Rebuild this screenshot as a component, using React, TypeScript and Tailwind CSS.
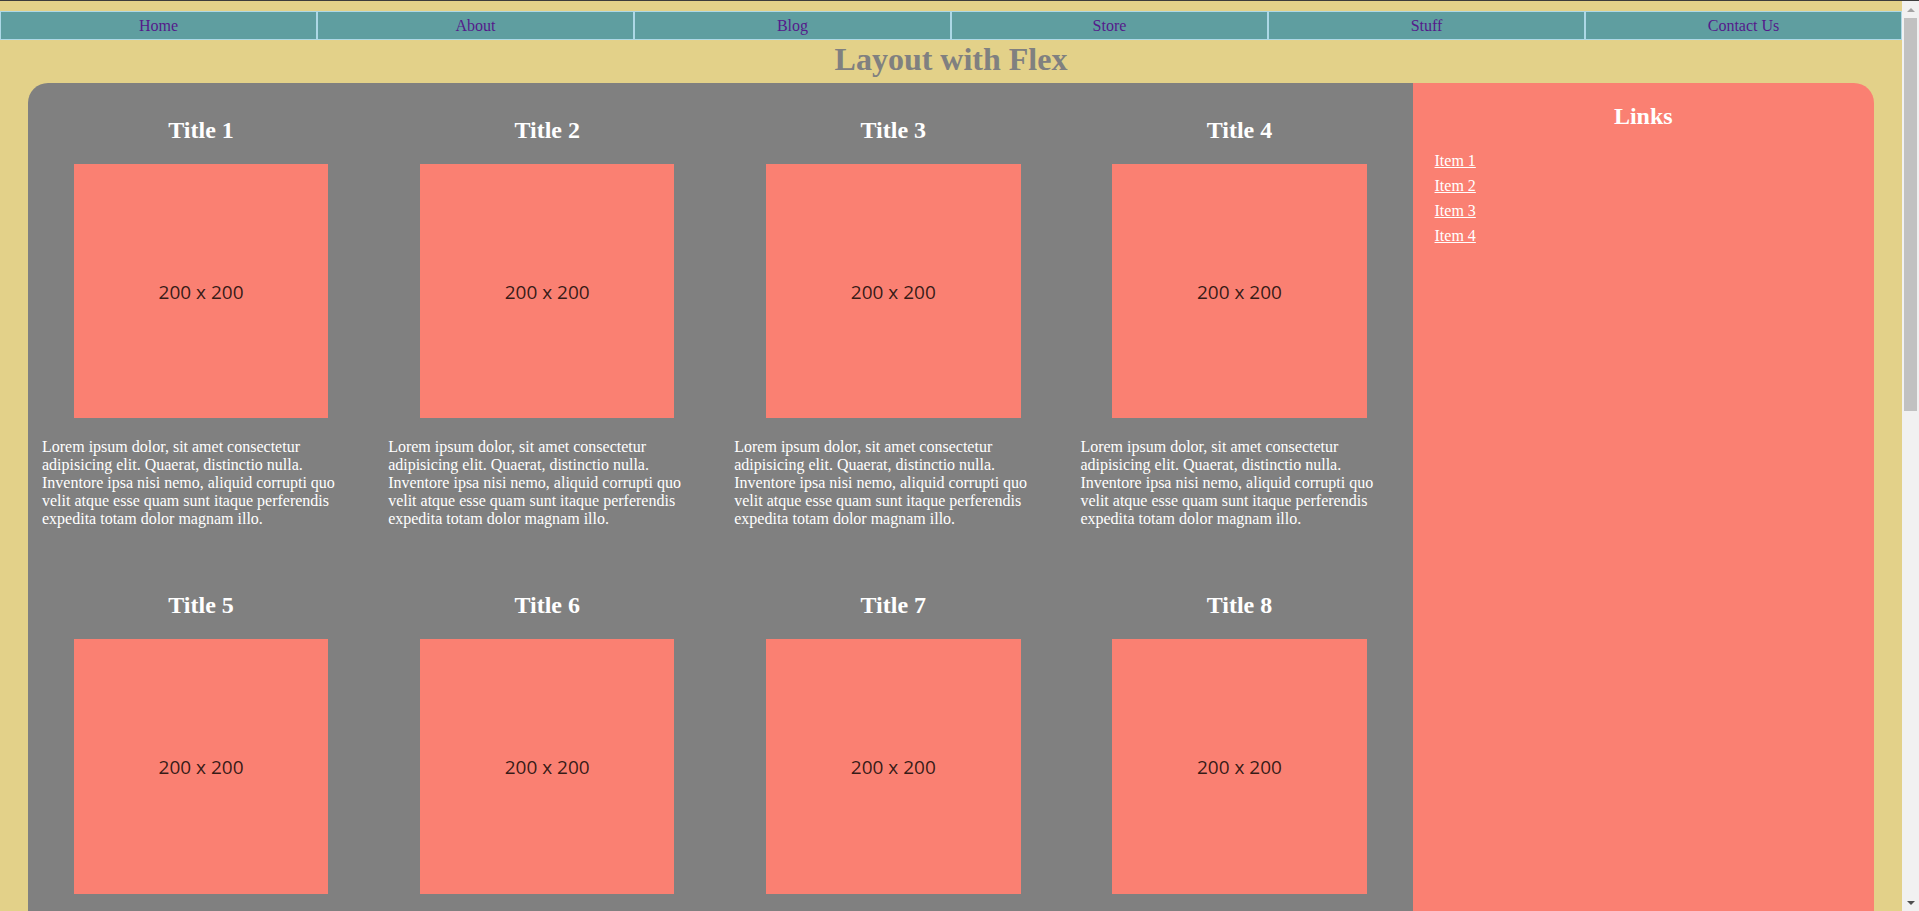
const navItems = ["Home", "About", "Blog", "Store", "Stuff", "Contact Us"];
const cards = [1, 2, 3, 4, 5, 6, 7, 8];
const links = ["Item 1", "Item 2", "Item 3", "Item 4"];

const lorem =
  "Lorem ipsum dolor, sit amet consectetur adipisicing elit. Quaerat, distinctio nulla. Inventore ipsa nisi nemo, aliquid corrupti quo velit atque esse quam sunt itaque perferendis expedita totam dolor magnam illo.";

function Card({ n }: { n: number }) {
  return (
    <article className="w-1/4 p-[14px] text-white">
      <h2 className="my-[19.92px] text-center text-2xl leading-[27px] font-bold">Title {n}</h2>
      <div className="mx-auto flex aspect-square w-[80%] items-center justify-center bg-[#fa8072]">
        <span className="pt-[2px] font-['Open_Sans',sans-serif] text-[19px] text-black/80">200 x 200</span>
      </div>
      <p className="mt-[20px] mb-4 text-base leading-[18px]">{lorem}</p>
    </article>
  );
}

// browser-style scrollbar drawn over the right edge
function Scrollbar() {
  return (
    <div className="fixed top-[1px] right-0 bottom-0 flex w-[17px] flex-col bg-[#f1f1f1]">
      <div className="flex h-[17px] items-center justify-center">
        <div className="h-0 w-0 border-x-[4px] border-b-[4px] border-x-transparent border-b-[#a3a3a3]" />
      </div>
      <div className="mx-[2px] h-[393px] bg-[#c1c1c1]" />
      <div className="flex-1" />
      <div className="flex h-[17px] items-center justify-center">
        <div className="h-0 w-0 border-x-[4px] border-t-[4px] border-x-transparent border-t-[#505050]" />
      </div>
    </div>
  );
}

export default function App() {
  return (
    <div className="min-h-screen border-t border-[#3c3c3c] bg-[#e3d189] pt-[10px] pr-[17px] font-['Liberation_Serif','Times_New_Roman',serif]">
      <nav>
        <ul className="flex">
          {navItems.map((item) => (
            <li
              key={item}
              className="flex h-[29px] flex-1 items-center justify-center border border-[#add8e6] bg-[#5f9ea0]"
            >
              <a href="#" className="text-base text-[#551a8b]">
                {item}
              </a>
            </li>
          ))}
        </ul>
      </nav>

      <h1 className="pt-[1px] text-center text-[32px] leading-[37px] font-bold text-[#808080]">Layout with Flex</h1>

      <div className="mx-[28px] mt-[5px] flex overflow-hidden rounded-t-[20px]">
        <main className="flex flex-[3] flex-wrap bg-[#808080]">
          {cards.map((n) => (
            <Card key={n} n={n} />
          ))}
        </main>
        <aside className="flex-1 bg-[#fa8072] text-white">
          <h2 className="mt-[19.92px] mb-[18px] text-center text-2xl leading-[27px] font-bold">Links</h2>
          <ul className="pl-[22px]">
            {links.map((l) => (
              <li key={l} className="leading-[25px]">
                <a href="#" className="text-base text-white underline">
                  {l}
                </a>
              </li>
            ))}
          </ul>
        </aside>
      </div>

      <Scrollbar />
    </div>
  );
}
